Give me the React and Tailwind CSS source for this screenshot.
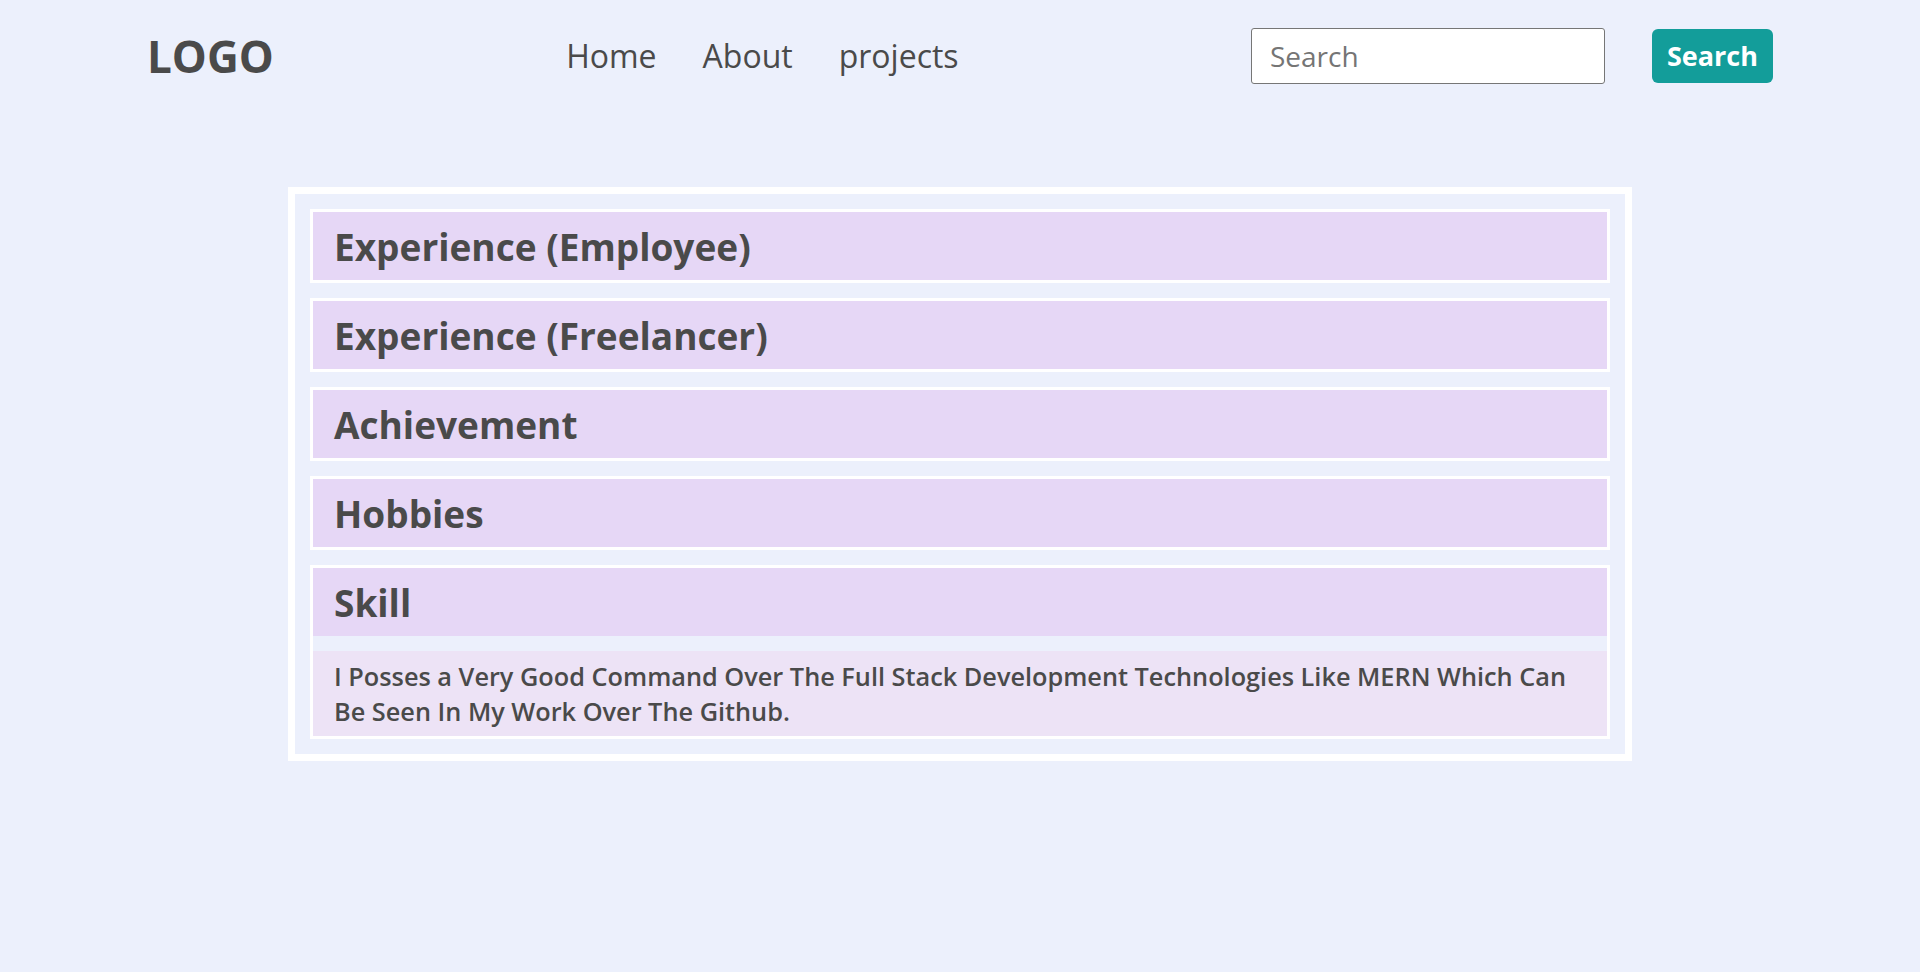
import React from "react";

const items = [
  "Experience (Employee)",
  "Experience (Freelancer)",
  "Achievement",
  "Hobbies",
];

function Header({ title }) {
  return (
    <div className="h-[68px] bg-[#e6d7f6] pl-[21px] pt-[10px]">
      <h2 className="text-[37px] leading-[50px] font-bold text-[#4a4a4a]">{title}</h2>
    </div>
  );
}

export default function App() {
  return (
    <div
      className="min-h-[972px] bg-[#ecf0fc] text-[#4a4a4a]"
      style={{ fontFamily: '"Open Sans", "Noto Sans", sans-serif' }}
    >
      <header className="h-[112px] px-[147px] flex items-center justify-between">
        <div className="text-[44px] font-bold">LOGO</div>
        <nav className="flex items-center gap-[46px] text-[32px]">
          <a href="#" className="leading-none">Home</a>
          <a href="#" className="leading-none">About</a>
          <a href="#" className="leading-none">projects</a>
        </nav>
        <form className="flex items-center gap-[47px]" onSubmit={(e) => e.preventDefault()}>
          <input
            type="text"
            placeholder="Search"
            className="w-[354px] h-[56px] bg-white border border-[#767676] rounded-[3px] px-[18px] text-[28px] placeholder:text-[#757575] outline-none"
          />
          <button
            type="submit"
            className="w-[121px] h-[54px] bg-[#139d9a] rounded-[6px] text-white text-[27px] font-bold"
          >
            Search
          </button>
        </form>
      </header>

      <main className="pt-[75px] flex justify-center">
        <div className="w-[1344px] border-[7px] border-white p-[15px] flex flex-col gap-[15px]">
          {items.map((t) => (
            <div key={t} className="border-[3px] border-white">
              <Header title={t} />
            </div>
          ))}
          <div className="border-[3px] border-white">
            <Header title="Skill" />
            <div className="h-[15px] bg-[#ecf0fc]" />
            <div className="bg-[#ede3f6] pl-[21px] pr-[10px] pt-[8px] pb-[7px]">
              <p className="text-[25.3px] leading-[35px] font-semibold text-[#4a4a4a] whitespace-nowrap">
                I Posses a Very Good Command Over The Full Stack Development Technologies Like MERN Which Can
                <br />
                Be Seen In My Work Over The Github.
              </p>
            </div>
          </div>
        </div>
      </main>
    </div>
  );
}
